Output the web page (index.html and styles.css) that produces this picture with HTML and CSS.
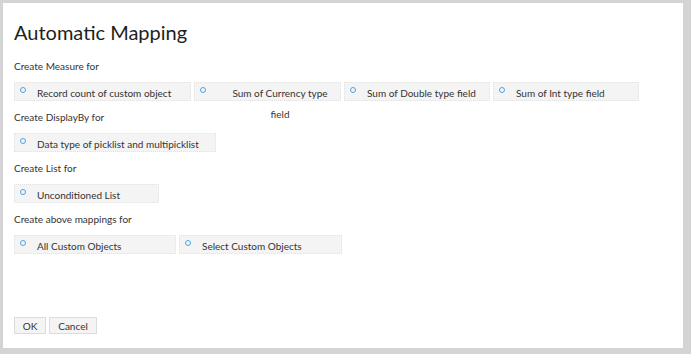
FILE: index.html
```html
<!DOCTYPE html>
<html lang="en">
<head>
    <meta charset="UTF-8">
    <title>Automatic Mapping</title>
    <link rel="stylesheet" href="styles.css">
</head>
<body>
    <div class="dialog">
        <h1 class="title">Automatic Mapping</h1>

        <div class="section-label">Create Measure for</div>
        <div class="options">
            <label class="option w-record"><span class="radio"></span><span class="text">Record count of custom object</span></label>
            <label class="option w-currency"><span class="radio"></span><span class="text centered">Sum of Currency type field</span></label>
            <label class="option w-double"><span class="radio"></span><span class="text">Sum of Double type field</span></label>
            <label class="option w-int"><span class="radio"></span><span class="text">Sum of Int type field</span></label>
        </div>

        <div class="section-label">Create DisplayBy for</div>
        <div class="options">
            <label class="option w-picklist"><span class="radio"></span><span class="text">Data type of picklist and multipicklist</span></label>
        </div>

        <div class="section-label">Create List for</div>
        <div class="options">
            <label class="option w-list"><span class="radio"></span><span class="text">Unconditioned List</span></label>
        </div>

        <div class="section-label">Create above mappings for</div>
        <div class="options">
            <label class="option w-all"><span class="radio"></span><span class="text">All Custom Objects</span></label>
            <label class="option w-select"><span class="radio"></span><span class="text">Select Custom Objects</span></label>
        </div>

        <div class="actions">
            <button class="btn btn-ok">OK</button>
            <button class="btn btn-cancel">Cancel</button>
        </div>
    </div>
</body>
</html>
```
FILE: styles.css
```css
html, body {
height: 100%;
}

body {
margin: 0;
background-color: #d4d4d4;
font-family: Lato, "Open Sans", sans-serif;
color: #333;
box-sizing: border-box;
padding: 3px 8px 6px 3px;
}

.dialog {
background-color: #fff;
height: 100%;
box-sizing: border-box;
padding: 15px 11px 0 11px;
display: flex;
flex-direction: column;
}

.title {
font-size: 20px;
font-weight: normal;
color: #1e1e1e;
margin: 0 0 13px 0;
line-height: 28px;
}

.section-label {
font-size: 10px;
line-height: 14px;
margin-bottom: 9px;
}

.options {
display: flex;
gap: 3px;
margin-bottom: 9px;
}

.option {
display: flex;
align-items: flex-start;
height: 19px;
box-sizing: border-box;
padding: 0 0 0 5px;
background-color: #f4f4f4;
border: 1px dotted #e3e3e3;
font-size: 10px;
line-height: 21px;
}

.radio {
flex: none;
width: 4px;
height: 4px;
margin-top: 4px;
border: 1px solid #4ba6e6;
border-radius: 50%;
}

.text {
margin-left: 11px;
white-space: nowrap;
}

.text.centered {
white-space: normal;
text-align: center;
width: 108px;
margin-left: 20px;
flex: none;
}

.w-record { width: 177px; }
.w-currency { width: 147px; }
.w-double { width: 146px; }
.w-int { width: 146px; }
.w-picklist { width: 202px; }
.w-list { width: 145px; }
.w-all { width: 162px; }
.w-select { width: 163px; }

.actions {
margin-top: auto;
margin-bottom: 14px;
display: flex;
gap: 3px;
}

.btn {
font-family: Lato, "Open Sans", sans-serif;
font-size: 10px;
color: #333;
background-color: #f4f4f4;
border: 1px solid #dcdcdc;
height: 17px;
padding: 0;
}

.btn-ok { width: 32px; }
.btn-cancel { width: 48px; }
```
